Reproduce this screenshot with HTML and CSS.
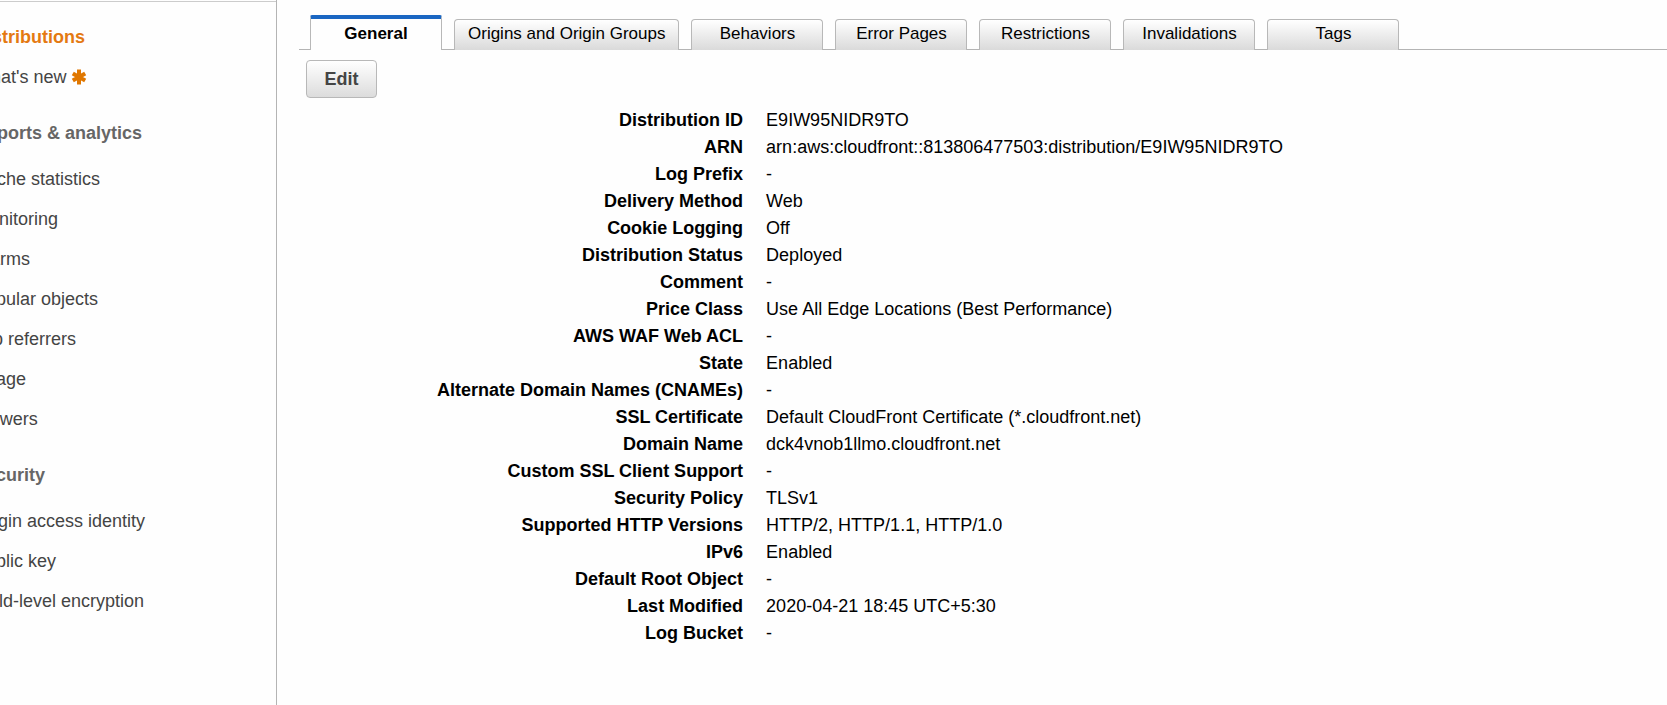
FILE: index.html
```
<!DOCTYPE html>
<html lang="en">
<head>
<meta charset="utf-8">
<title>CloudFront Distribution</title>
<link rel="stylesheet" href="styles.css">
</head>
<body>
<div class="layout">
  <nav class="sidebar" aria-label="CloudFront">
    <div class="sidebar-inner">
      <ul class="nav-list">
        <li><a class="active" href="#">Distributions</a></li>
        <li><a href="#">What's new <svg class="star" viewBox="0 0 16 16" aria-hidden="true"><path d="M8 0.5v15M1.8 4.4l12.4 7.2M14.2 4.4l-12.4 7.2"/></svg></a></li>
      </ul>
      <h2>Reports &amp; analytics</h2>
      <ul class="nav-list">
        <li><a href="#">Cache statistics</a></li>
        <li><a href="#">Monitoring</a></li>
        <li><a href="#">Alarms</a></li>
        <li><a href="#">Popular objects</a></li>
        <li><a href="#">Top referrers</a></li>
        <li><a href="#">Usage</a></li>
        <li><a href="#">Viewers</a></li>
      </ul>
      <h2>Security</h2>
      <ul class="nav-list">
        <li><a href="#">Origin access identity</a></li>
        <li><a href="#">Public key</a></li>
        <li><a href="#">Field-level encryption</a></li>
      </ul>
    </div>
  </nav>
  <main class="main">
    <div class="tabs" role="tablist">
      <button class="tab selected" role="tab" aria-selected="true">General</button>
      <button class="tab" role="tab">Origins and Origin Groups</button>
      <button class="tab" role="tab">Behaviors</button>
      <button class="tab" role="tab">Error Pages</button>
      <button class="tab" role="tab">Restrictions</button>
      <button class="tab" role="tab">Invalidations</button>
      <button class="tab" role="tab">Tags</button>
    </div>
    <button class="edit">Edit</button>
    <table class="details">
      <tr><th scope="row">Distribution ID</th><td>E9IW95NIDR9TO</td></tr>
      <tr><th scope="row">ARN</th><td>arn:aws:cloudfront::813806477503:distribution/E9IW95NIDR9TO</td></tr>
      <tr><th scope="row">Log Prefix</th><td>-</td></tr>
      <tr><th scope="row">Delivery Method</th><td>Web</td></tr>
      <tr><th scope="row">Cookie Logging</th><td>Off</td></tr>
      <tr><th scope="row">Distribution Status</th><td>Deployed</td></tr>
      <tr><th scope="row">Comment</th><td>-</td></tr>
      <tr><th scope="row">Price Class</th><td>Use All Edge Locations (Best Performance)</td></tr>
      <tr><th scope="row">AWS WAF Web ACL</th><td>-</td></tr>
      <tr><th scope="row">State</th><td>Enabled</td></tr>
      <tr><th scope="row">Alternate Domain Names (CNAMEs)</th><td>-</td></tr>
      <tr><th scope="row">SSL Certificate</th><td>Default CloudFront Certificate (*.cloudfront.net)</td></tr>
      <tr><th scope="row">Domain Name</th><td>dck4vnob1llmo.cloudfront.net</td></tr>
      <tr><th scope="row">Custom SSL Client Support</th><td>-</td></tr>
      <tr><th scope="row">Security Policy</th><td>TLSv1</td></tr>
      <tr><th scope="row">Supported HTTP Versions</th><td>HTTP/2, HTTP/1.1, HTTP/1.0</td></tr>
      <tr><th scope="row">IPv6</th><td>Enabled</td></tr>
      <tr><th scope="row">Default Root Object</th><td>-</td></tr>
      <tr><th scope="row">Last Modified</th><td>2020-04-21 18:45 UTC+5:30</td></tr>
      <tr><th scope="row">Log Bucket</th><td>-</td></tr>
    </table>
  </main>
</div>
</body>
</html>
```
FILE: styles.css
```
* { box-sizing: border-box; }

body {
  margin: 0;
  background: #fefefe;
  color: #000;
  font-family: "Liberation Sans", Arial, sans-serif;
  font-size: 18px;
  line-height: 20px;
}

.layout {
  display: flex;
  min-height: 100vh;
}

.sidebar {
  flex: none;
  width: 277px;
  padding-top: 1px;
  border-right: 1px solid #b4b4b4;
  overflow: hidden;
}

.sidebar-inner {
  margin-left: -26px;
  padding-top: 25px;
  border-top: 1px solid #ccc;
}

.nav-list {
  display: flex;
  flex-direction: column;
  gap: 20px;
  margin: 0;
  padding: 0;
  list-style: none;
}

.nav-list a {
  display: flex;
  align-items: center;
  gap: 5px;
  color: #444;
  text-decoration: none;
}

.nav-list .active {
  color: #e47911;
  font-weight: bold;
}

.star {
  width: 16px;
  height: 16px;
  fill: none;
  stroke: #e07700;
  stroke-width: 4;
}

.sidebar h2 {
  margin: 36px 0 26px;
  color: #666;
  font-size: 18px;
  line-height: 20px;
}

.main {
  flex: 1;
  min-width: 0;
  padding: 15px 0 0 22px;
}

.tabs {
  display: flex;
  align-items: flex-end;
  gap: 12px;
  padding-left: 11px;
  background: linear-gradient(#b4b4b4, #b4b4b4) bottom / 100% 1px no-repeat;
}

.tab {
  min-width: 132px;
  height: 31px;
  padding: 0 13px 2px;
  border: 1px solid #b8b8b8;
  border-bottom: 0;
  border-radius: 4px 4px 0 0;
  background: linear-gradient(#fff, #dadada);
  color: #000;
  font: 17px/28px "Liberation Sans", Arial, sans-serif;
}

.tab.selected {
  height: 35px;
  border-top: 4px solid #1a66c2;
  border-radius: 2px 2px 0 0;
  background: #fefefe;
  font-weight: bold;
}

.edit {
  display: block;
  min-width: 71px;
  height: 38px;
  margin: 10px 0 9px 7px;
  border: 1px solid #b8b8b8;
  border-radius: 4px;
  background: linear-gradient(#fff, #dcdcdc);
  color: #444;
  font: bold 18px/20px "Liberation Sans", Arial, sans-serif;
}

.details {
  width: 100%;
  border-collapse: collapse;
  line-height: 27px;
}

.details th {
  width: 34%;
  padding: 0 21px 0 0;
  text-align: right;
}

.details td {
  padding: 0 0 0 2px;
}
```
